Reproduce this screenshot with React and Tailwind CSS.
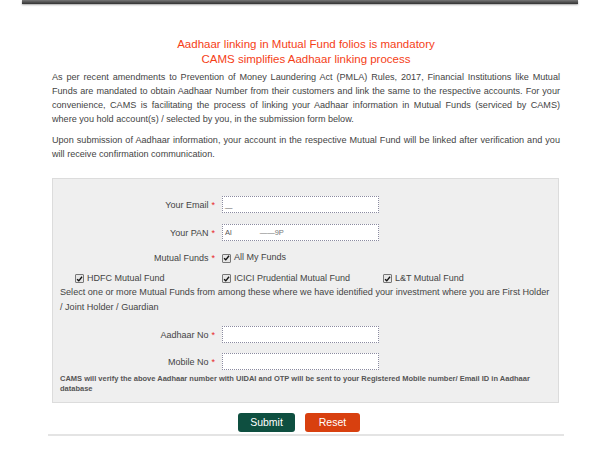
import React from "react";

const Check = () => (
  <span className="inline-flex items-center justify-center w-[9px] h-[9px] border border-[#777] bg-[#e6e6e6] rounded-[1px] mr-[3px] shrink-0">
    <svg viewBox="0 0 10 10" className="w-[8px] h-[8px]">
      <path d="M1.5 5.2 L4 7.6 L8.6 1.8" fill="none" stroke="#111" strokeWidth="2" />
    </svg>
  </span>
);

const Star = () => <span className="text-[#e8262a] ml-[3px]">*</span>;

const Row = ({ label, children, className = "" }) => (
  <div className={`flex items-center ${className}`}>
    <div className="w-[162px] text-right text-[9px] text-[#444] pr-[7px] leading-[12px]">
      {label}
      <Star />
    </div>
    {children}
  </div>
);

const Field = ({ children }) => (
  <div className="w-[157px] h-[17px] bg-white border border-dotted border-[#8b8ba0] flex items-center px-[2px] text-[7.5px] text-[#555] overflow-hidden">
    {children}
  </div>
);

const J = ({ children, className = "" }) => (
  <div className={`text-justify [text-align-last:justify] ${className}`}>{children}</div>
);

export default function App() {
  const body = "font-['Liberation_Sans',Arial,sans-serif]";
  return (
    <div className={`w-[600px] h-[450px] bg-white overflow-hidden ${body}`}>
      {/* top bar */}
      <div className="mx-[22px] h-[4px] bg-gradient-to-b from-[#777] to-[#333] shadow-[0_1px_2px_rgba(0,0,0,0.35)]" />

      <div className="ml-[52px] w-[508px]">
        {/* heading */}
        <div className="mt-[33px] text-center text-[11.5px] leading-[15px] text-[#f53e17]">
          <div>Aadhaar linking in Mutual Fund folios is mandatory</div>
          <div>CAMS simplifies Aadhaar linking process</div>
        </div>

        {/* intro */}
        <div className="mt-[3px] text-[9.1px] leading-[14px] text-[#444]">
          <J>As per recent amendments to Prevention of Money Laundering Act (PMLA) Rules, 2017, Financial Institutions like Mutual</J>
          <J>Funds are mandated to obtain Aadhaar Number from their customers and link the same to the respective accounts. For your</J>
          <J>convenience, CAMS is facilitating the process of linking your Aadhaar information in Mutual Funds (serviced by CAMS)</J>
          <div>where you hold account(s) / selected by you, in the submission form below.</div>
          <J className="mt-[7px]">Upon submission of Aadhaar information, your account in the respective Mutual Fund will be linked after verification and you</J>
          <div>will receive confirmation communication.</div>
        </div>
      </div>

      {/* form */}
      <div className="ml-[52px] w-[507px] mt-[17px] bg-[#efefef] border border-[#dcdcdc] pt-[17px] pb-[8px] pl-[7px] pr-[6px]">
        <Row label="Your Email">
          <Field>
            <span className="mt-[6px] text-[#666]">—</span>
          </Field>
        </Row>
        <Row label="Your PAN" className="mt-[11px]">
          <Field>
            <span>Al</span>
            <span className="w-[28px]" />
            <span className="text-[#777]">——9P</span>
          </Field>
        </Row>
        <Row label="Mutual Funds" className="mt-[10px] h-[14px]">
          <div className="flex items-center text-[9px] text-[#444]">
            <Check />
            All My Funds
          </div>
        </Row>

        <div className="mt-[7px] h-[13px] flex items-center text-[9px] text-[#444]">
          <div className="w-[162px] pl-[15px] flex items-center">
            <Check />
            HDFC Mutual Fund
          </div>
          <div className="w-[161px] flex items-center">
            <Check />
            ICICI Prudential Mutual Fund
          </div>
          <div className="flex items-center">
            <Check />
            L&amp;T Mutual Fund
          </div>
        </div>
        <div className="text-[9.1px] leading-[15px] text-[#444] whitespace-nowrap">
          Select one or more Mutual Funds from among these where we have identified your investment where you are First Holder
          <br />/ Joint Holder / Guardian
        </div>

        <Row label="Aadhaar No" className="mt-[11px]">
          <Field />
        </Row>
        <Row label="Mobile No" className="mt-[10px]">
          <Field />
        </Row>
        <div className="mt-[4px] text-[7.5px] leading-[10px] font-bold text-[#555] whitespace-nowrap">
          CAMS will verify the above Aadhaar number with UIDAI and OTP will be sent to your Registered Mobile number/ Email ID in Aadhaar
          <br />database
        </div>
      </div>

      {/* buttons */}
      <div className="mt-[10px] flex justify-center gap-[10px] pr-[2px]">
        <button className="w-[57px] h-[19px] rounded-[3px] bg-[#0e4f40] text-white text-[10.5px] leading-[19px]">
          Submit
        </button>
        <button className="w-[55px] h-[19px] rounded-[3px] bg-[#d8400f] text-white text-[10.5px] leading-[19px]">
          Reset
        </button>
      </div>
      <div className="ml-[48px] w-[516px] mt-[2px] h-[2px] bg-[#e4e4e4]" />
    </div>
  );
}
